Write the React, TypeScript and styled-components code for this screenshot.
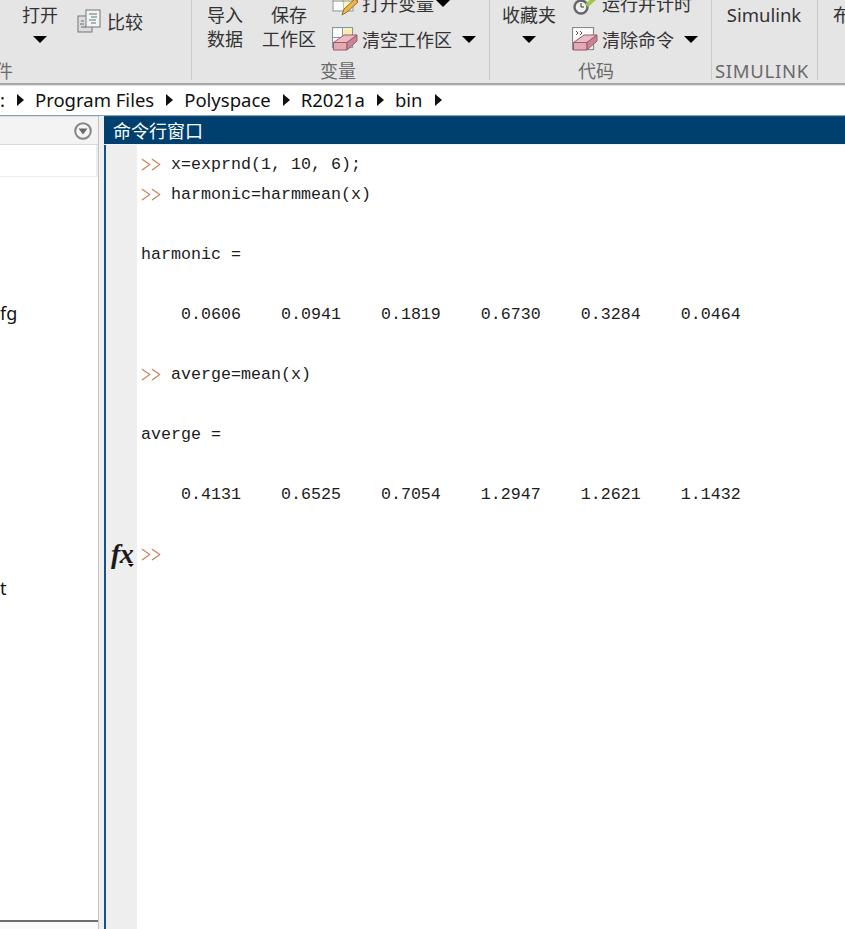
import React from "react";
import styled, { createGlobalStyle } from "styled-components";

const Global = createGlobalStyle`
  html, body { margin: 0; padding: 0; background: #fff; }
  body { width: 845px; height: 929px; overflow: hidden; font-family: "Noto Sans", "Noto Sans CJK SC", sans-serif; }
`;
const Page = styled.div`
  width: 845px; height: 929px; display: flex; flex-direction: column; overflow: hidden;
`;
const Ribbon = styled.div`
  height: 83px; flex: none; background: #e5e5e5; display: flex; overflow: hidden;
`;
const Section = styled.div<{ $w: number }>`
  width: ${(p) => p.$w}px; flex: none; height: 80px; box-sizing: border-box;
  border-right: 1px solid #c9c9c9; display: flex; flex-direction: column; justify-content: flex-end;
  &:last-child { border-right: none; }
`;
const Tools = styled.div<{ $pad: number }>`
  display: flex; align-items: flex-end; padding-left: ${(p) => p.$pad}px; height: 51px; flex: none;
`;
const Label = styled.div<{ $pad: number }>`
  height: 29px; flex: none; box-sizing: border-box; text-indent: ${(p) => p.$pad}px; padding-top: 8px;
  font-size: 18px; line-height: 24px; color: #6a6a6a; white-space: nowrap;
`;
const LatinLabel = styled(Label)`
  font-size: 18.5px; letter-spacing: 0.7px;
`;
const Big = styled.div<{ $w: number; $mr: number }>`
  width: ${(p) => p.$w}px; margin-right: ${(p) => p.$mr}px; flex: none; display: flex; flex-direction: column;
  align-items: center; height: 51px; justify-content: flex-end;
  font-size: 18px; line-height: 24px; color: #333; white-space: nowrap;
`;
const LatinBig = styled(Big)`
  font-size: 18.5px;
`;
const BigLine = styled.div`
  height: 24px; display: flex; align-items: center; justify-content: center; flex: none;
`;
const Stack = styled.div`
  display: flex; flex-direction: column; justify-content: flex-end; height: 75px; align-self: flex-end; flex: none;
`;
const Row = styled.div`
  display: flex; align-items: center; height: 36px; flex: none; font-size: 18px; color: #333; white-space: nowrap;
  &:last-child { height: 24px; margin-top: 6px; }
`;
const CompareRow = styled(Row)`
  &:last-child { height: 60px; margin-top: 0; }
`;
const IconWrap = styled.span<{ $mr: number }>`
  display: inline-flex; flex: none; margin-right: ${(p) => p.$mr}px;
`;
const Caret = styled.span<{ $ml?: number }>`
  flex: none; width: 0; height: 0; margin-left: ${(p) => p.$ml ?? 0}px;
  border-left: 7px solid transparent; border-right: 7px solid transparent; border-top: 7px solid #000;
`;
const Crumbs = styled.div`
  height: 33px; flex: none; box-sizing: border-box; background: #fff; border-top: 2px solid #a9a9a9;
  border-bottom: 1px solid #8aa0b0; box-shadow: inset 0 1px 0 #e0e0e0; padding-bottom: 1px;
  display: flex; align-items: center; font-size: 18.5px; color: #111; white-space: nowrap;
`;
const CrumbArrow = styled.span`
  flex: none; width: 0; height: 0; margin: 0 11px 0 12px;
  border-top: 6px solid transparent; border-bottom: 6px solid transparent; border-left: 7px solid #111;
`;
const Body = styled.div`
  flex: 1; min-height: 0; display: flex;
`;
const Side = styled.div`
  width: 99px; flex: none; display: flex; flex-direction: column; background: #fff; border-right: 1px solid #c4c4c4; box-sizing: border-box;
`;
const SideHead = styled.div`
  height: 29px; flex: none; background: #f3f3f3; display: flex; justify-content: flex-end; align-items: center; padding-right: 6px;
  border-top: 1px solid #dcdcdc; border-bottom: 1px solid #d8d8d8; box-sizing: border-box;
`;
const SideSel = styled.div`
  height: 32px; flex: none; border-right: 2px solid #ececec; border-bottom: 1px solid #ececec; box-sizing: border-box;
`;
const SideList = styled.div`
  flex: 1; min-height: 0; display: flex; flex-direction: column; font-size: 18px; color: #111;
`;
const SideItem = styled.div<{ $h: number }>`
  height: ${(p) => p.$h}px; flex: none; display: flex; align-items: flex-end; line-height: 24px;
`;
const SideFoot = styled.div`
  height: 9px; flex: none; background: #fafafa; border-top: 2px solid #6e6e6e; box-sizing: border-box;
`;
const Splitter = styled.div`
  width: 5px; flex: none; background: #f0f0f0;
`;
const Cmd = styled.div`
  flex: 1; min-width: 0; display: flex; flex-direction: column; border-left: 2px solid #17508c;
`;
const CmdTitle = styled.div`
  height: 29px; flex: none; margin-left: -2px; background: #00406f; color: #fff; font-size: 18px; line-height: 28px; padding-left: 9px;
  border-top: 1px solid #0c4f85; box-sizing: border-box; border-bottom: 1px solid #f0f4f8;
`;
const CmdBody = styled.div`
  flex: 1; min-height: 0; display: flex; background: #fff;
`;
const Gutter = styled.div`
  width: 31px; flex: none; background: #eee; padding-top: 394px; box-sizing: border-box; position: relative;
`;
const Fx = styled.div`
  font-family: "Liberation Serif", serif; font-weight: bold; font-style: italic; font-size: 28px; line-height: 30px; color: #1a1a1a;
  padding-left: 5px; letter-spacing: -0.5px;
`;
const FxCaret = styled.span`
  position: absolute; left: 22px; top: 419px; width: 0; height: 0;
  border-left: 3px solid transparent; border-right: 3px solid transparent; border-top: 3px solid #000;
`;
const Lines = styled.div`
  padding: 5px 0 0 4px; font-family: "Liberation Mono", monospace; font-size: 16.67px; line-height: 30px; color: #1c1c1c; white-space: pre;
`;
const Line = styled.div`
  height: 30px;
`;
const Prompt = styled.span`
  display: inline-block; width: 20px; height: 30px; vertical-align: top; overflow: visible;
  font-family: "Liberation Serif", serif; font-size: 25px; line-height: 30px; color: #c8703c;
  transform: scaleX(0.72); transform-origin: left center; letter-spacing: -0.2px;
`;

const Compare = () => (
  <svg width="24" height="24" viewBox="0 0 24 24">
    <rect x="1" y="7" width="14" height="16" fill="#dcdcdc" stroke="#777" />
    <rect x="9" y="1" width="14" height="17" fill="#f2f5f5" stroke="#777" />
    <path d="M12 5h8M14 8h6M12 11h7M14 14h5M4 12h3M3 15h4M4 18h5" stroke="#607070" />
  </svg>
);
const OpenVar = () => (
  <svg width="26" height="26" viewBox="0 0 26 26">
    <rect x="1" y="1" width="20" height="20" fill="#fbf3bf" stroke="#8a9aa6" />
    <path d="M11 1v20M1 11h20" stroke="#8a9aa6" />
    <rect x="2" y="12" width="9" height="8" fill="#fff" />
    <path d="M10 25l2-6 11-10 3 3-11 10z" fill="#efb64a" stroke="#96702c" />
    <path d="M22 9l2-2 3 3-2 2z" fill="#d86a7a" />
  </svg>
);
const ClearVar = () => (
  <svg width="26" height="24" viewBox="0 0 26 24">
    <rect x="0.5" y="0.5" width="20" height="20" fill="#fff" stroke="#8597a6" strokeWidth="1.2" />
    <path d="M10.5 1v20M1 10.5h20" stroke="#8597a6" />
    <rect x="11.5" y="1.5" width="8" height="8" fill="#fbeea8" />
    <path d="M1.5 15.5L12 8h13l-10 7.5z" fill="#ecbcc6" stroke="#9c5a68" />
    <path d="M1.5 15.5h13.5v7.5H1.5z" fill="#e3a9b4" stroke="#9c5a68" />
    <path d="M15 15.5L25 8v6l-10 9z" fill="#c98594" stroke="#9c5a68" />
  </svg>
);
const Timer = () => (
  <svg width="26" height="24" viewBox="0 0 26 24">
    <circle cx="9" cy="16" r="6.5" fill="#eef0f0" stroke="#666" strokeWidth="2.4" />
    <path d="M9 12v4h3" fill="none" stroke="#333" />
    <path d="M13 13l11-9v5l-8 7z" fill="#9cc94a" />
  </svg>
);
const ClearCmd = () => (
  <svg width="26" height="24" viewBox="0 0 26 24">
    <rect x="0.5" y="0.5" width="21" height="22" fill="#fbfbfb" stroke="#8a8a8a" strokeWidth="1.2" />
    <path d="M4 4l2 2-2 2M8 4l2 2-2 2" fill="none" stroke="#555" />
    <path d="M1.5 15.5L12 8h13l-10 7.5z" fill="#ecbcc6" stroke="#9c5a68" />
    <path d="M1.5 15.5h13.5v7.5H1.5z" fill="#e3a9b4" stroke="#9c5a68" />
    <path d="M15 15.5L25 8v6l-10 9z" fill="#c98594" stroke="#9c5a68" />
  </svg>
);
const Options = () => (
  <svg width="18" height="18" viewBox="0 0 18 18">
    <circle cx="9" cy="9" r="7.8" fill="#f4f4f4" stroke="#858585" strokeWidth="2" />
    <path d="M4.5 6.5h9L9 12.5z" fill="#6a6a6a" />
  </svg>
);

const P = () => <Prompt>&gt;&gt;</Prompt>;

const output: React.ReactNode[] = [
  <><P /> x=exprnd(1, 10, 6);</>,
  <><P /> harmonic=harmmean(x)</>,
  "",
  "harmonic =",
  "",
  "    0.0606    0.0941    0.1819    0.6730    0.3284    0.0464",
  "",
  <><P /> averge=mean(x)</>,
  "",
  "averge =",
  "",
  "    0.4131    0.6525    0.7054    1.2947    1.2621    1.1432",
  "",
  <P />,
];

export default function App() {
  return (
    <Page>
      <Global />
      <Ribbon>
        <Section $w={192}>
          <Tools $pad={22}>
            <Big $w={36} $mr={19}>
              <BigLine>打开</BigLine>
              <BigLine><Caret /></BigLine>
            </Big>
            <Stack>
              <CompareRow>
                <IconWrap $mr={6}><Compare /></IconWrap>比较
              </CompareRow>
            </Stack>
          </Tools>
          <Label $pad={-5}>件</Label>
        </Section>
        <Section $w={298}>
          <Tools $pad={15}>
            <Big $w={36} $mr={19}>
              <BigLine>导入</BigLine>
              <BigLine>数据</BigLine>
            </Big>
            <Big $w={54} $mr={16}>
              <BigLine>保存</BigLine>
              <BigLine>工作区</BigLine>
            </Big>
            <Stack>
              <Row><IconWrap $mr={4}><OpenVar /></IconWrap>打开变量<Caret $ml={2} /></Row>
              <Row><IconWrap $mr={4}><ClearVar /></IconWrap>清空工作区<Caret $ml={10} /></Row>
            </Stack>
          </Tools>
          <Label $pad={128}>变量</Label>
        </Section>
        <Section $w={222}>
          <Tools $pad={12}>
            <Big $w={54} $mr={16}>
              <BigLine>收藏夹</BigLine>
              <BigLine><Caret /></BigLine>
            </Big>
            <Stack>
              <Row><IconWrap $mr={4}><Timer /></IconWrap>运行并计时</Row>
              <Row><IconWrap $mr={4}><ClearCmd /></IconWrap>清除命令<Caret $ml={10} /></Row>
            </Stack>
          </Tools>
          <Label $pad={88}>代码</Label>
        </Section>
        <Section $w={106}>
          <Tools $pad={15}>
            <LatinBig $w={74} $mr={0}>
              <BigLine>Simulink</BigLine>
              <BigLine />
            </LatinBig>
          </Tools>
          <LatinLabel $pad={3}>SIMULINK</LatinLabel>
        </Section>
        <Section $w={27}>
          <Tools $pad={15}>
            <Big $w={18} $mr={0}>
              <BigLine>布</BigLine>
              <BigLine />
            </Big>
          </Tools>
          <Label $pad={0} />
        </Section>
      </Ribbon>
      <Crumbs>
        :<CrumbArrow />Program Files<CrumbArrow />Polyspace<CrumbArrow />R2021a<CrumbArrow />bin<CrumbArrow />
      </Crumbs>
      <Body>
        <Side>
          <SideHead><Options /></SideHead>
          <SideSel />
          <SideList>
            <SideItem $h={148}>fg</SideItem>
            <SideItem $h={275}>t</SideItem>
          </SideList>
          <SideFoot />
        </Side>
        <Splitter />
        <Cmd>
          <CmdTitle>命令行窗口</CmdTitle>
          <CmdBody>
            <Gutter>
              <Fx>fx</Fx>
              <FxCaret />
            </Gutter>
            <Lines>
              {output.map((l, i) => (
                <Line key={i}>{l}</Line>
              ))}
            </Lines>
          </CmdBody>
        </Cmd>
      </Body>
    </Page>
  );
}
